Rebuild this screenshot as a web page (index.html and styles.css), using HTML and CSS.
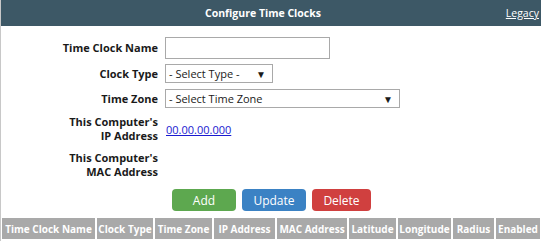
FILE: index.html
```html
<!DOCTYPE html>
<html lang="en">
<head>
    <meta charset="UTF-8">
    <title>Configure Time Clocks</title>
    <link rel="stylesheet" href="styles.css">
</head>
<body>
    <div class="page">
        <div class="header">
            <h1>Configure Time Clocks</h1>
            <a href="#" class="legacy">Legacy</a>
        </div>

        <table class="form">
            <tr>
                <td class="label">Time Clock Name</td>
                <td><input type="text" class="name-input"></td>
            </tr>
            <tr>
                <td class="label">Clock Type</td>
                <td>
                    <div class="select type-select">- Select Type -<span class="arrow">&#9660;</span></div>
                </td>
            </tr>
            <tr>
                <td class="label">Time Zone</td>
                <td>
                    <div class="select zone-select">- Select Time Zone<span class="arrow">&#9660;</span></div>
                </td>
            </tr>
            <tr>
                <td class="label">This Computer's<br>IP Address</td>
                <td><a href="#" class="ip">00.00.00.000</a></td>
            </tr>
            <tr>
                <td class="label">This Computer's<br>MAC Address</td>
                <td></td>
            </tr>
        </table>

        <div class="buttons">
            <button class="btn btn-add">Add</button>
            <button class="btn btn-update">Update</button>
            <button class="btn btn-delete">Delete</button>
        </div>

        <table class="clocks">
            <tr>
                <th class="col-name">Time Clock Name</th>
                <th class="col-type">Clock Type</th>
                <th class="col-zone">Time Zone</th>
                <th class="col-ip">IP Address</th>
                <th class="col-mac">MAC Address</th>
                <th class="col-lat">Latitude</th>
                <th class="col-lon">Longitude</th>
                <th class="col-rad">Radius</th>
                <th class="col-en">Enabled</th>
            </tr>
        </table>
    </div>
</body>
</html>
```

FILE: styles.css
```css
body {
    margin: 0;
    font-family: 'Open Sans', 'Liberation Sans', sans-serif;
    font-size: 11px;
    color: #1a1a1a;
    background: #fff;
}

.page {
    width: 540px;
    min-height: 241px;
    border-left: 1px solid #c8c8c8;
}

.header {
    position: relative;
    height: 26px;
    padding-right: 16px;
    background: #3d5866;
    color: #fff;
    text-align: center;
}

.header h1 {
    margin: 0;
    font-size: 10.5px;
    font-weight: 700;
    line-height: 26px;
}

.legacy {
    position: absolute;
    right: 2px;
    top: 0;
    line-height: 26px;
    color: #fff;
    font-size: 10.5px;
}

.form {
    border-collapse: collapse;
    margin: 8px 0 0 0;
}

.form td {
    padding: 0;
    vertical-align: middle;
}

.form .label {
    width: 157px;
    padding-right: 7px;
    text-align: right;
    font-weight: 700;
    line-height: 14px;
}

.form tr:nth-child(1) td { height: 27px; }
.form tr:nth-child(2) td { height: 25px; }
.form tr:nth-child(3) td { height: 25px; }
.form tr:nth-child(4) td { height: 36px; }
.form tr:nth-child(5) td { height: 36px; }

.name-input {
    box-sizing: border-box;
    width: 165px;
    height: 22px;
    margin: 0;
    border: 1px solid #a9a9a9;
    font-family: inherit;
}

.select {
    box-sizing: border-box;
    display: flex;
    justify-content: space-between;
    align-items: center;
    height: 19px;
    padding: 0 6px 0 3px;
    border: 1px solid #a9a9a9;
    font-size: 11px;
}

.type-select { width: 108px; }
.zone-select { width: 235px; }

.arrow {
    font-size: 10px;
}

.ip {
    color: #1a1ad0;
    margin-left: 1px;
}

.buttons {
    display: flex;
    gap: 6px;
    margin: 6px 0 0 171px;
}

.btn {
    height: 22px;
    padding: 0;
    border: none;
    border-radius: 4px;
    color: #fff;
    font-family: inherit;
    font-size: 12px;
}

.btn-add { width: 64px; background: #5da84f; }
.btn-update { width: 64px; background: #3b82c4; }
.btn-delete { width: 59px; background: #d0403f; }

.clocks {
    table-layout: fixed;
    width: 542px;
    border-collapse: separate;
    border-spacing: 2px 0;
    margin: 7px 0 0 -1px;
}

.clocks th {
    background: #a9a9a9;
    color: #fff;
    font-size: 10px;
    font-weight: 700;
    height: 21px;
    padding: 0;
    white-space: nowrap;
    overflow: hidden;
}

.col-name { width: 93px; }
.col-type { width: 56px; }
.col-zone { width: 57px; }
.col-ip { width: 61px; }
.col-mac { width: 70px; }
.col-lat { width: 47px; }
.col-lon { width: 53px; }
.col-rad { width: 41px; }
.col-en { width: 44px; }
```
